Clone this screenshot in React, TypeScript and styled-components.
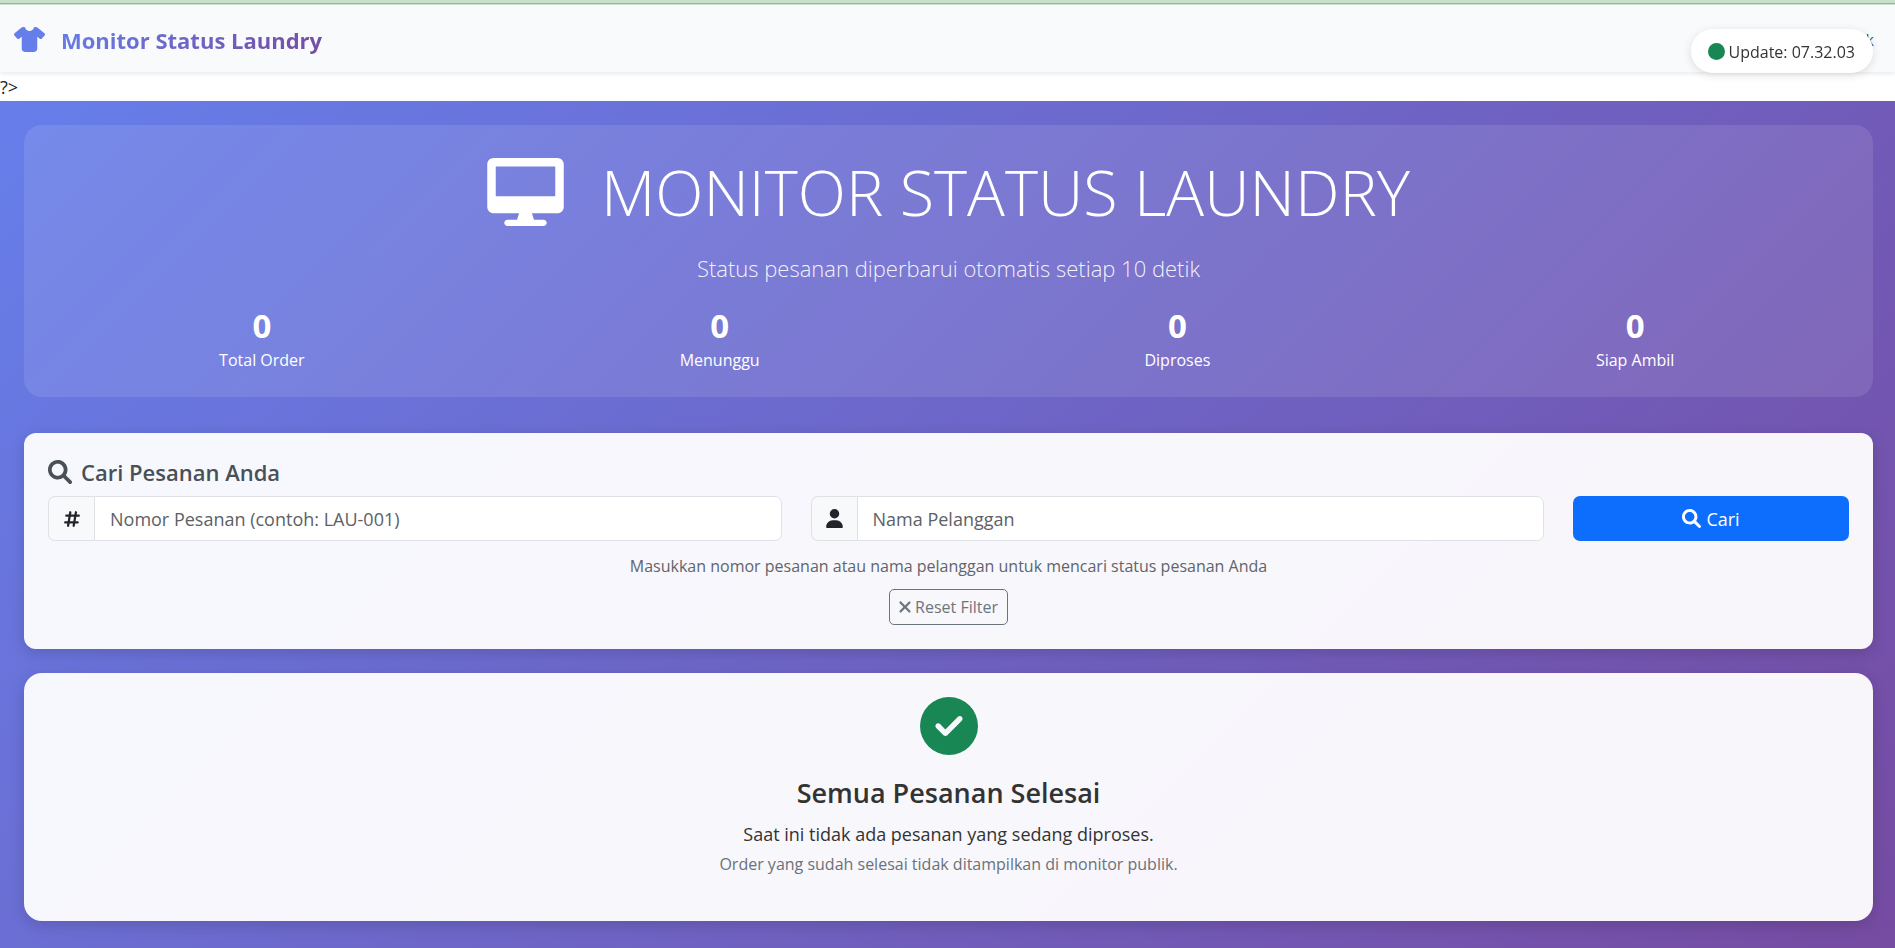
import React, { useState } from 'react';
import styled, { createGlobalStyle, css } from 'styled-components';
import { FaCircle, FaCircleCheck, FaHashtag, FaShirt, FaUser } from 'react-icons/fa6';

const fontStack = '"Open Sans", "Noto Sans", sans-serif';

const GlobalStyle = createGlobalStyle`
  *, *::before, *::after { box-sizing: border-box; }
  body {
    margin: 0;
    background: #fff;
    color: #212529;
    font: 400 18px/28px ${fontStack};
  }
  h1, h2, p, dl, dd, dt { margin: 0; }
  input, button { font-family: inherit; }
`;

const Page = styled.div`
  display: flex;
  flex-direction: column;
  min-height: 100vh;
`;

const TopStrip = styled.div`
  height: 5px;
  background: linear-gradient(#c5e1c9 3px, #98b29b 3px 4px, #cfe5d2 4px);
`;

const Navbar = styled.header`
  position: relative;
  display: flex;
  align-items: center;
  justify-content: space-between;
  height: 67px;
  padding: 2px 21px 0 14px;
  background: #f8fafc;
  box-shadow: 0 2px 4px rgba(0, 0, 0, 0.08);
`;

const Brand = styled.a`
  display: flex;
  align-items: center;
  gap: 16px;
  color: #667eea;
  text-decoration: none;
`;

const ShirtIcon = styled(FaShirt)`
  width: 31px;
  height: 25px;
`;

const BrandText = styled.span`
  font-size: 22px;
  font-weight: 700;
  line-height: 32px;
  background: linear-gradient(135deg, #667eea 0%, #764ba2 100%);
  background-clip: text;
  -webkit-background-clip: text;
  color: transparent;
`;

const NavLink = styled.a`
  color: #4a5568;
  font-size: 16px;
  text-decoration: none;
`;

const UpdateBadge = styled.div`
  position: fixed;
  top: 29px;
  right: 22px;
  display: flex;
  align-items: center;
  gap: 4px;
  height: 44px;
  padding: 1px 18px 0 17px;
  border-radius: 22px;
  background: #fff;
  color: #333;
  font-size: 16px;
  line-height: 24px;
  box-shadow: 0 2px 10px rgba(0, 0, 0, 0.12);

  svg { color: #198754; }
`;

const StrayText = styled.div`
  padding-top: 1px;
`;

const Monitor = styled.main`
  flex: 1;
  padding: 24px 22px 24px 24px;
  background: linear-gradient(135deg, #667eea 0%, #764ba2 100%);
`;

const Hero = styled.section`
  padding: 29px 9px 25px;
  border-radius: 18px;
  background: rgba(255, 255, 255, 0.1);
  color: #fff;
  text-align: center;
`;

const HeroTitle = styled.h1`
  display: flex;
  align-items: center;
  justify-content: center;
  gap: 37px;
  font-size: 63px;
  font-weight: 300;
  line-height: 76px;
`;

const HeroSubtitle = styled.p`
  margin-top: 22px;
  color: rgba(255, 255, 255, 0.92);
  font-size: 22px;
  font-weight: 300;
  line-height: 32px;
`;

const Stats = styled.dl`
  display: grid;
  grid-template-columns: repeat(4, 1fr);
  margin-top: 20px;
`;

const Stat = styled.div`
  display: flex;
  flex-direction: column-reverse;
`;

const StatValue = styled.dd`
  font-size: 33px;
  font-weight: 700;
  line-height: 44px;
`;

const StatLabel = styled.dt`
  font-size: 16px;
  line-height: 24px;
`;

const Card = styled.section<{ $radius: number; $gap: number; $bottom: number }>`
  margin-top: ${({ $gap }) => $gap}px;
  padding: 24px 24px ${({ $bottom }) => $bottom}px;
  border-radius: ${({ $radius }) => $radius}px;
  background: rgba(255, 255, 255, 0.95);
  box-shadow: 0 4px 15px rgba(0, 0, 0, 0.15);
`;

const SearchTitle = styled.h2`
  display: flex;
  align-items: center;
  gap: 9px;
  color: #495057;
  font-size: 22px;
  font-weight: 600;
  line-height: 30px;
`;

const SearchForm = styled.form`
  display: grid;
  grid-template-columns: repeat(12, 1fr);
  column-gap: 29px;
  margin-top: 9px;
  text-align: center;
`;

const InputGroup = styled.div`
  grid-column: span 5;
  display: flex;
  height: 45px;
`;

const Addon = styled.label`
  display: flex;
  align-items: center;
  justify-content: center;
  width: 46px;
  border: 1px solid #dee2e6;
  border-right: 0;
  border-radius: 7px 0 0 7px;
  background: #f8f9fa;
`;

const TextInput = styled.input`
  flex: 1;
  min-width: 0;
  padding: 0 15px;
  border: 1px solid #dee2e6;
  border-radius: 0 7px 7px 0;
  background: #fff;
  color: #212529;
  font-size: 18px;
  line-height: 28px;

  &::placeholder { color: #5c6166; opacity: 1; }
`;

const buttonBase = css`
  display: inline-flex;
  align-items: center;
  justify-content: center;
  cursor: pointer;
`;

const SearchButton = styled.button`
  ${buttonBase}
  grid-column: span 2;
  gap: 5px;
  border: 0;
  border-radius: 7px;
  background: #0d6efd;
  color: #fff;
  font-size: 18px;
  line-height: 28px;
`;

const Hint = styled.p`
  grid-column: 1 / -1;
  margin: 13px 0 11px;
  color: #5f656b;
  font-size: 16px;
  line-height: 24px;
`;

const ResetRow = styled.div`
  grid-column: 1 / -1;
  display: flex;
  justify-content: center;
`;

const ResetButton = styled.button`
  ${buttonBase}
  gap: 4px;
  height: 36px;
  padding: 0 9px;
  border: 1px solid #6c757d;
  border-radius: 5px;
  background: transparent;
  color: #6c757d;
  font-size: 16px;
  line-height: 24px;
`;

const EmptyState = styled.div`
  display: flex;
  flex-direction: column;
  align-items: center;
  text-align: center;
  color: #333;
`;

const EmptyTitle = styled.h2`
  margin-top: 21px;
  font-size: 27px;
  font-weight: 600;
  line-height: 34px;
`;

const EmptyText = styled.p`
  margin-top: 11px;
  font-size: 18px;
  line-height: 27px;
`;

const EmptyNote = styled.p`
  margin-top: 4px;
  color: #6b7178;
  font-size: 16px;
  line-height: 24px;
`;

const DesktopIcon = () => (
  <svg width="77" height="68" viewBox="0 0 576 512" fill="currentColor" aria-hidden="true">
    <path d="M528 0h-480C21.5 0 0 21.5 0 48v320C0 394.5 21.5 416 48 416h192L224 464H152C138.8 464 128 474.8 128 488S138.8 512 152 512h272c13.25 0 24-10.75 24-24s-10.75-24-24-24H352L336 416h192c26.5 0 48-21.5 48-48v-320C576 21.5 554.5 0 528 0zM512 288H64V64h448V288z" />
  </svg>
);

const SearchIcon = ({ size }: { size: number }) => (
  <svg width={size} height={size} viewBox="0 0 512 512" fill="currentColor" aria-hidden="true">
    <path d="M500.3 443.7l-119.7-119.7c27.22-40.41 40.65-90.9 33.46-144.7C401.8 87.79 326.8 13.32 235.2 1.723C99.01-15.51-15.51 99.01 1.724 235.2c11.6 91.64 86.08 166.7 177.6 178.9c53.8 7.189 104.3-6.236 144.7-33.46l119.7 119.7c15.62 15.62 40.95 15.62 56.57 0C515.9 484.7 515.9 459.3 500.3 443.7zM79.1 208c0-70.58 57.42-128 128-128s128 57.42 128 128c0 70.58-57.42 128-128 128S79.1 278.6 79.1 208z" />
  </svg>
);

const CloseIcon = () => (
  <svg width="12" height="18" viewBox="0 0 320 512" fill="currentColor" aria-hidden="true">
    <path d="M310.6 361.4c12.5 12.5 12.5 32.75 0 45.25C304.4 412.9 296.2 416 288 416s-16.38-3.125-22.62-9.375L160 301.3L54.63 406.6C48.38 412.9 40.19 416 32 416S15.63 412.9 9.375 406.6c-12.5-12.5-12.5-32.75 0-45.25l105.4-105.4L9.375 150.6c-12.5-12.5-12.5-32.75 0-45.25s32.75-12.5 45.25 0L160 210.8l105.4-105.4c12.5-12.5 32.75-12.5 45.25 0s12.5 32.75 0 45.25l-105.4 105.4L310.6 361.4z" />
  </svg>
);

const stats = [
  { label: 'Total Order', value: 0 },
  { label: 'Menunggu', value: 0 },
  { label: 'Diproses', value: 0 },
  { label: 'Siap Ambil', value: 0 },
];

export default function App() {
  const [orderNumber, setOrderNumber] = useState('');
  const [customer, setCustomer] = useState('');

  const reset = () => {
    setOrderNumber('');
    setCustomer('');
  };

  return (
    <Page>
      <GlobalStyle />
      <TopStrip />
      <Navbar>
        <Brand href="#">
          <ShirtIcon />
          <BrandText>Monitor Status Laundry</BrandText>
        </Brand>
        <NavLink href="#">k</NavLink>
      </Navbar>
      <StrayText>?&gt;</StrayText>
      <UpdateBadge role="status">
        <FaCircle size={17} />
        <span>Update: 07.32.03</span>
      </UpdateBadge>

      <Monitor>
        <Hero>
          <HeroTitle>
            <DesktopIcon />
            MONITOR STATUS LAUNDRY
          </HeroTitle>
          <HeroSubtitle>Status pesanan diperbarui otomatis setiap 10 detik</HeroSubtitle>
          <Stats>
            {stats.map((s) => (
              <Stat key={s.label}>
                <StatLabel>{s.label}</StatLabel>
                <StatValue>{s.value}</StatValue>
              </Stat>
            ))}
          </Stats>
        </Hero>

        <Card $radius={12} $gap={36} $bottom={24}>
          <SearchTitle>
            <SearchIcon size={24} />
            Cari Pesanan Anda
          </SearchTitle>
          <SearchForm onSubmit={(e) => e.preventDefault()}>
            <InputGroup>
              <Addon htmlFor="order-number" aria-label="Nomor Pesanan">
                <FaHashtag size={18} />
              </Addon>
              <TextInput
                id="order-number"
                placeholder="Nomor Pesanan (contoh: LAU-001)"
                value={orderNumber}
                onChange={(e) => setOrderNumber(e.target.value)}
              />
            </InputGroup>
            <InputGroup>
              <Addon htmlFor="customer-name" aria-label="Nama Pelanggan">
                <FaUser size={19} />
              </Addon>
              <TextInput
                id="customer-name"
                placeholder="Nama Pelanggan"
                value={customer}
                onChange={(e) => setCustomer(e.target.value)}
              />
            </InputGroup>
            <SearchButton type="submit">
              <SearchIcon size={19} />
              Cari
            </SearchButton>
            <Hint>Masukkan nomor pesanan atau nama pelanggan untuk mencari status pesanan Anda</Hint>
            <ResetRow>
              <ResetButton type="button" onClick={reset}>
                <CloseIcon />
                Reset Filter
              </ResetButton>
            </ResetRow>
          </SearchForm>
        </Card>

        <Card $radius={18} $gap={24} $bottom={45}>
          <EmptyState>
            <FaCircleCheck size={58} color="#198754" />
            <EmptyTitle>Semua Pesanan Selesai</EmptyTitle>
            <EmptyText>Saat ini tidak ada pesanan yang sedang diproses.</EmptyText>
            <EmptyNote>Order yang sudah selesai tidak ditampilkan di monitor publik.</EmptyNote>
          </EmptyState>
        </Card>
      </Monitor>
    </Page>
  );
}
